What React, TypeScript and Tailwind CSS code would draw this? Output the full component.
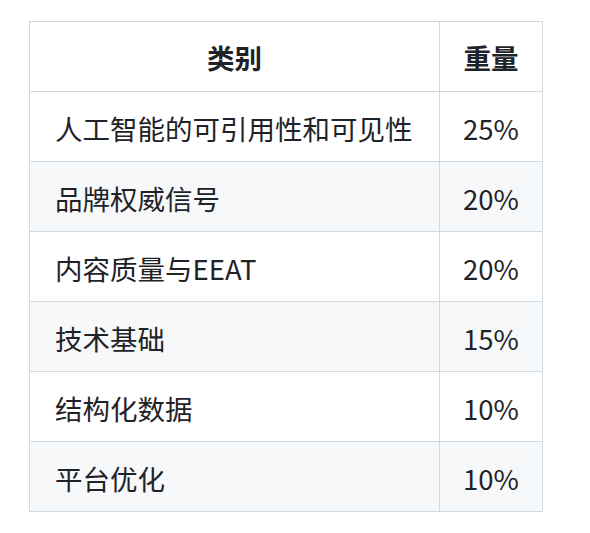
import React from "react";

const rows: [string, string][] = [
  ["人工智能的可引用性和可见性", "25%"],
  ["品牌权威信号", "20%"],
  ["内容质量与EEAT", "20%"],
  ["技术基础", "15%"],
  ["结构化数据", "10%"],
  ["平台优化", "10%"],
];

export default function App() {
  return (
    <div
      className="w-[590px] h-[533px] bg-white pt-[21px] pl-[29px]"
      style={{ fontFamily: '"Noto Sans CJK SC", "Noto Sans", sans-serif' }}
    >
      <table className="border-collapse text-[#1f2328] text-[27.5px] leading-none table-fixed w-[514px]">
        <thead>
          <tr className="h-[70px] bg-white">
            <th className="w-[410px] border border-[#d1d9e0] font-bold text-center px-[25px] pt-[3px]">类别</th>
            <th className="border border-[#d1d9e0] font-bold text-center px-[20px] pt-[3px]">重量</th>
          </tr>
        </thead>
        <tbody>
          {rows.map(([a, b], i) => (
            <tr key={i} className={`h-[70px] ${i % 2 === 1 ? "bg-[#f6f8fa]" : "bg-white"}`}>
              <td className="border border-[#d1d9e0] px-[25px] pt-[4px] text-left whitespace-nowrap">{a}</td>
              <td className="border border-[#d1d9e0] pl-[23px] pt-[4px] text-left">{b}</td>
            </tr>
          ))}
        </tbody>
      </table>
    </div>
  );
}
